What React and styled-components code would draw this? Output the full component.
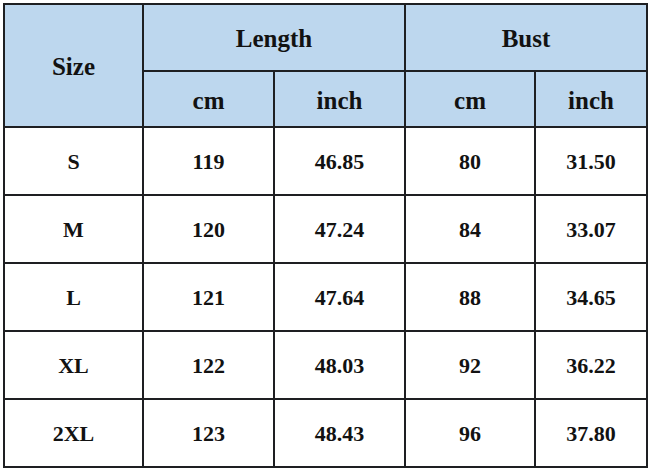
import React from "react";
import styled, { createGlobalStyle } from "styled-components";

const GlobalStyle = createGlobalStyle`
  html, body {
    margin: 0;
    padding: 0;
    background: #ffffff;
  }
  body {
    width: 656px;
    height: 472px;
    overflow: hidden;
  }
`;

const Page = styled.div`
  padding: 3px 0 0 3px;
`;

const Grid = styled.div`
  display: inline-grid;
  grid-template-columns: 137px 129px 129px 128px 110px;
  grid-template-rows: 65px 54px repeat(5, 66px);
  gap: 2px;
  padding: 2px;
  background: #1e1f22;
  font-family: "Liberation Serif", "Times New Roman", serif;
  font-weight: 700;
  color: #121212;
`;

const Cell = styled.div`
  display: flex;
  align-items: center;
  justify-content: center;
  background: ${(p) => (p.$head ? "#bdd7ee" : "#ffffff")};
  font-size: ${(p) => (p.$head ? "25px" : "22px")};
  grid-column: ${(p) => p.$col || "auto"};
  grid-row: ${(p) => p.$row || "auto"};
  padding-top: ${(p) => (p.$head ? "3px" : "2px")};
`;

const rows = [
  ["S", "119", "46.85", "80", "31.50"],
  ["M", "120", "47.24", "84", "33.07"],
  ["L", "121", "47.64", "88", "34.65"],
  ["XL", "122", "48.03", "92", "36.22"],
  ["2XL", "123", "48.43", "96", "37.80"],
];

export default function App() {
  return (
    <>
      <GlobalStyle />
      <Page>
        <Grid>
          <Cell $head $row="1 / span 2" $col="1">Size</Cell>
          <Cell $head $col="2 / span 2">Length</Cell>
          <Cell $head $col="4 / span 2">Bust</Cell>
          <Cell $head>cm</Cell>
          <Cell $head>inch</Cell>
          <Cell $head>cm</Cell>
          <Cell $head>inch</Cell>
          {rows.map((r) =>
            r.map((v, i) => <Cell key={r[0] + i}>{v}</Cell>)
          )}
        </Grid>
      </Page>
    </>
  );
}
